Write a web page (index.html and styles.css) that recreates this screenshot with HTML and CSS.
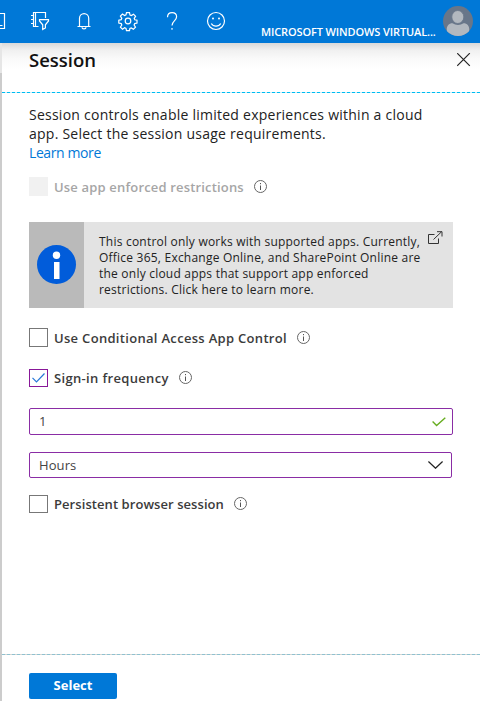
FILE: index.html
```
<!DOCTYPE html>
<html lang="en">
<head>
<meta charset="utf-8">
<title>Session</title>
<link rel="stylesheet" href="styles.css">
</head>
<body>
<svg class="defs" width="0" height="0">
  <symbol id="info" viewBox="0 0 14 14"><circle cx="6.500" cy="6.500" r="6" fill="none" stroke="#666" stroke-width="1"/><path d="M6.500 5.500v4.500M6.500 3v1.200" stroke="#555" fill="none"/></symbol>
</svg>
<header class="topbar">
  <svg class="icons" width="240" height="43" viewBox="0 0 240 43" fill="none" stroke="#fff" stroke-width="1.2">
    <path d="M0 13.5h4.5v15H0M0 25.5h2.5"/>
    <path d="M38.500 26.500H33.500V12.500H45.500V18M35.500 12.500V26.500M31 15.500h2.500M31 19.500h2.500M31 23.500h2.500"/>
    <path d="M39.500 19.700h9v1.300l-3.100 3.800v3.200l-2.700 1.500v-4.700l-3.200-3.800z"/>
    <path d="M77.500 26.500h13M79.500 26.300V18.200a4.600 4.600 0 0 1 9.200 0v8.100M82 27.300a2 1.600 0 0 0 4 0"/>
    <path d="M126.500 12.600h3l.5 2.400 1.400.6 2.100-1.400 2.100 2.100-1.400 2.100.6 1.400 2.200.4v2.900l-2.300.5-.6 1.400 1.400 2.100-2.100 2.100-2.100-1.300-1.400.6-.4 2.200h-3l-.5-2.300-1.400-.6-2.100 1.400-2.100-2.100 1.400-2.100-.6-1.400-2.400-.5v-2.900l2.400-.5.6-1.400-1.400-2.100 2.100-2.100 2.100 1.400 1.400-.6z"/>
    <circle cx="128" cy="21" r="2.800"/>
    <path d="M167.500 17.200c0-2.800 1.900-4.600 4.600-4.600s4.500 1.700 4.500 4.200c0 4-4.600 4.300-4.600 8.700M172 28v1.800"/>
    <circle cx="216" cy="21" r="8.500"/><path d="M211.300 23.500c2 3.500 7.400 3.500 9.400 0"/>
    <circle cx="213" cy="18.500" r="1" fill="#fff" stroke="none"/><circle cx="219" cy="18.500" r="1" fill="#fff" stroke="none"/>
  </svg>
  <span class="tenant">MICROSOFT WINDOWS VIRTUAL...</span>
  <svg class="avatar" width="30" height="30" viewBox="0 0 30 30"><circle cx="15" cy="15" r="15" fill="#687689"/><path d="M4 25.200c-1-4 1-8 5.500-8q2.500 1.700 5.500 1.700t5.500-1.700c4.500 0 6.500 4 5.500 8A15 15 0 0 1 4 25.200z" fill="#b2b8bf"/><ellipse cx="14.800" cy="11" rx="6" ry="6.500" fill="#b2b8bf" stroke="#687689" stroke-width=".8"/></svg>
</header>
<main class="panel">
  <div class="title-row">
    <h1>Session</h1>
    <svg class="close" width="14" height="14" viewBox="0 0 14 14"><path d="M.2.200l12.600 12.600M12.800.200L.2 12.800" stroke="#222" stroke-width="1.200"/></svg>
  </div>
  <section class="content">
    <p class="intro"><span>Session controls enable limited experiences within a cloud</span><br><span>app. Select the session usage requirements.</span><br><a class="learn">Learn more</a></p>
    <div class="option disabled"><span class="box"></span><span class="l1">Use app enforced restrictions</span><svg class="info" width="14" height="14"><use href="#info"/></svg></div>
    <div class="note">
      <div class="note-side"><svg width="40" height="40" viewBox="0 0 40 40"><circle cx="19.500" cy="19.500" r="19.500" fill="#015cda"/><circle cx="19.500" cy="10.200" r="3.700" fill="#fff"/><path d="M17 17h5.500v17H17z" fill="#fff"/></svg></div>
      <p class="note-text">This control only works with supported apps. Currently,<br>Office 365, Exchange Online, and SharePoint Online are<br>the only cloud apps that support app enforced<br>restrictions. Click here to learn more.</p>
      <svg class="external" width="15" height="14" viewBox="0 0 15 14" fill="none" stroke="#333"><path d="M6.500 3.500H.5v9h10V7.500M5.500 8.500L13.500.800M9 .700h5v4.800"/></svg>
    </div>
    <div class="option conditional"><span class="box"></span><span class="l2">Use Conditional Access App Control</span><svg class="info" width="14" height="14"><use href="#info"/></svg></div>
    <div class="option signin"><span class="box"><svg width="17" height="16" viewBox="0 0 17 16"><path d="M2.500 7.800l4 4.200 8-8.500" fill="none" stroke="#2878d8" stroke-width="1.200"/></svg></span><span class="l3">Sign-in frequency</span><svg class="info" width="14" height="14"><use href="#info"/></svg></div>
    <div class="field number"><span>1</span><svg width="14" height="10" viewBox="0 0 14 10"><path d="M.6 4.600l4 4L13.300.800" fill="none" stroke="#67ad21" stroke-width="1.400"/></svg></div>
    <div class="field unit"><span>Hours</span><svg width="15" height="8" viewBox="0 0 15 8"><path d="M.4.500l7.100 6.700L14.600.500" fill="none" stroke="#222" stroke-width="1.300"/></svg></div>
    <div class="option persistent"><span class="box"></span><span class="l4">Persistent browser session</span><svg class="info" width="14" height="14"><use href="#info"/></svg></div>
  </section>
  <footer><button>Select</button></footer>
</main>
</body>
</html>
```
FILE: styles.css
```
* { box-sizing: border-box; }
body { margin: 0; width: 480px; height: 701px; overflow: hidden; background: #fff; font-family: "Open Sans", "Noto Sans", sans-serif; color: #222; }
h1, p { margin: 0; font-weight: 400; }
svg { display: block; flex: none; }
.defs { position: absolute; }
.topbar { height: 43px; background: #0078d7; display: flex; color: #fff; }
.tenant { width: 175px; margin-left: 21px; padding-top: 23px; font-size: 11px; font-weight: 600; line-height: 18px; white-space: nowrap; letter-spacing: -.12px; }
.avatar { margin: 6px 0 0 7px; }
.panel { height: 658px; padding-left: 2px; background: linear-gradient(#e6e6e6 0 30px, #ccc 30px) left / 2px 100% no-repeat; display: flex; flex-direction: column; }
.title-row { height: 50px; flex: none; display: flex; justify-content: space-between; padding: 3px 9px 0 27px; background: repeating-linear-gradient(90deg, #00bcf2 0 3px, #c8f0fb 3px 5px) bottom / 100% 1px no-repeat, linear-gradient(#d9d9d9, #f0f0f0 7px, #fafafa 16px, #fff 26px); }
h1 { font-size: 18.500px; font-weight: 600; line-height: 27px; color: #111; white-space: nowrap; }
.close { margin-top: 7px; }
.content { flex: 1; padding: 12px 27px 0; }
.intro { font-size: 14px; line-height: 19px; white-space: nowrap; letter-spacing: .245px; }
.learn { color: #0078d7; letter-spacing: -.4px; }
.option { display: flex; align-items: center; height: 19px; font-size: 13px; font-weight: 600; color: #3b3b3b; white-space: nowrap; }
.box { width: 19px; height: 19px; border: 1px solid #777; margin-right: 6px; flex: none; }
.info { margin-left: 10px; }
.l1 { letter-spacing: .17px; }
.l2 { letter-spacing: .31px; }
.l3 { letter-spacing: .34px; }
.l4 { letter-spacing: .07px; }
.disabled { margin-top: 15px; color: #a6a6a6; }
.disabled .box { border: 0; background: #f1f1f1; }
.note { width: 424px; height: 86px; margin-top: 26px; background: #e3e3e3; display: flex; }
.note-side { width: 55px; background: #bababa; display: flex; align-items: center; justify-content: center; }
.note-text { width: 328px; padding: 12px 0 0 15px; font-size: 12px; line-height: 16px; white-space: nowrap; letter-spacing: .22px; }
.external { margin: 9px 0 0 16px; }
.conditional { margin-top: 20px; }
.signin { margin-top: 21px; }
.signin .box { height: 18px; border-color: #881798; }
.l3 { padding-top: 1px; }
.field { border: 1px solid #8a2da5; border-radius: 2px; display: flex; align-items: center; justify-content: space-between; padding: 0 0 1px 9px; font-size: 13px; color: #444; }
.number { width: 424px; height: 27px; margin-top: 21px; padding-right: 6px; }
.unit { width: 423px; height: 26px; margin-top: 17px; padding: 0 8px 0 9px; letter-spacing: .1px; }
.number svg { margin-top: 2px; }
.persistent { margin-top: 16px; }
.persistent .box { height: 18px; }
.l4 { padding-top: 1px; }
footer { height: 47px; padding: 19px 27px 0; background: repeating-linear-gradient(90deg, #8fc1d0 0 3px, #d5d5d2 3px 5px) top / 100% 1px no-repeat; }
button { display: block; width: 88px; height: 26px; border: 0; border-radius: 2px; padding: 0 0 2px; background: #0078d7; color: #fff; font: 700 13px "Open Sans", sans-serif; }
```
